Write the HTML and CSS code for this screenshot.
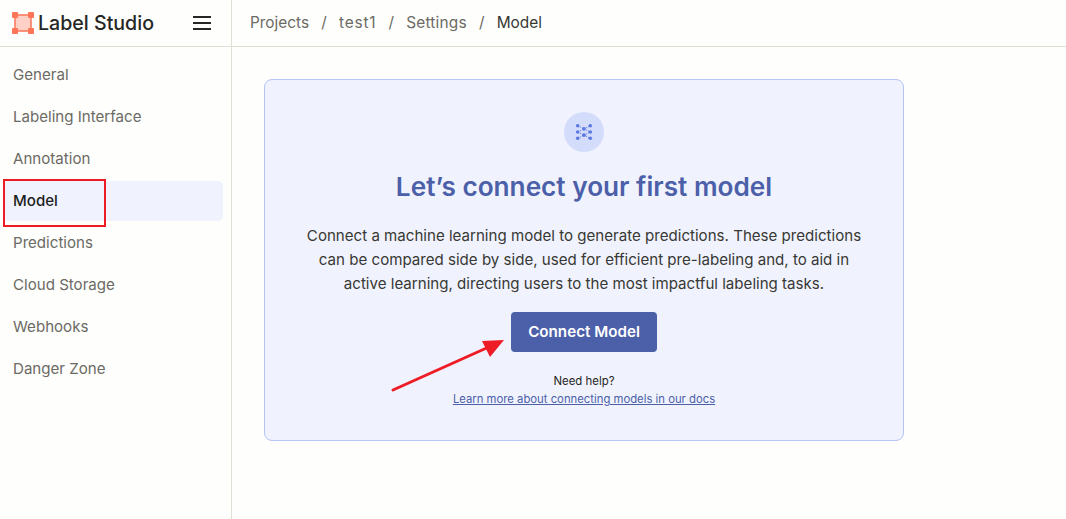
FILE: index.html
```html
<!DOCTYPE html>
<html>
	<head>
		<meta charset="utf-8" />
		<title>Model settings</title>
		<link rel="stylesheet" href="styles.css">
	</head>
	<body>
		<div class="topbar">
			<div class="brand">
				<svg class="logo" width="22" height="22" viewBox="0 0 22 22">
					<rect x="3" y="3" width="16" height="16" rx="2" fill="#ffd0c6" stroke="#ff7557" stroke-width="1.5" />
					<rect x="0" y="0" width="6" height="6" rx="1" fill="#ff7557" />
					<rect x="16" y="0" width="6" height="6" rx="1" fill="#ff7557" />
					<rect x="0" y="16" width="6" height="6" rx="1" fill="#ff7557" />
					<rect x="16" y="16" width="6" height="6" rx="1" fill="#ff7557" />
				</svg>
				<span class="brand-name">Label Studio</span>
				<div class="burger"><i></i><i></i><i></i></div>
			</div>
			<div class="crumbs">
				<a>Projects</a><span>/</span>
				<a class="project">test1</a><span>/</span>
				<a class="settings">Settings</a><span>/</span>
				<a class="current">Model</a>
			</div>
		</div>
		<div class="page">
			<div class="sidebar">
				<a class="item">General</a>
				<a class="item">Labeling Interface</a>
				<a class="item">Annotation</a>
				<a class="item active">Model<b class="highlight"></b></a>
				<a class="item">Predictions</a>
				<a class="item">Cloud Storage</a>
				<a class="item">Webhooks</a>
				<a class="item">Danger Zone</a>
			</div>
			<div class="content">
				<div class="card">
					<div class="badge">
						<svg width="20" height="20" viewBox="0 0 20 20">
							<g stroke="#5b78e0" stroke-width="1" stroke-dasharray="1.4 1.2" fill="none">
								<path d="M3 3L10 6.5L17 3M3 10L10 6.5L17 10M3 10L10 13.5L17 10M3 17L10 13.5L17 17" />
							</g>
							<g fill="#5b78e0">
								<circle cx="3" cy="3" r="2" />
								<circle cx="17" cy="3" r="2" />
								<circle cx="3" cy="10" r="2" />
								<circle cx="17" cy="10" r="2" />
								<circle cx="3" cy="17" r="2" />
								<circle cx="17" cy="17" r="2" />
								<circle cx="10" cy="6.5" r="2" />
								<circle cx="10" cy="13.5" r="2" />
							</g>
						</svg>
					</div>
					<h2 class="title">Let’s connect your first model</h2>
					<p class="text">Connect a machine learning model to generate predictions. These predictions can be compared side by side, used for efficient pre-labeling and, to aid in active learning, directing users to the most impactful labeling tasks.</p>
					<button class="button">Connect Model</button>
					<span class="help">Need help?</span>
					<a class="docs">Learn more about connecting models in our docs</a>
					<svg class="arrow" width="120" height="60" viewBox="0 0 120 60">
						<path d="M2 50L100 6" stroke="#ee1c25" stroke-width="3" stroke-linecap="round" />
						<path d="M113 0L91 1L99 17Z" fill="#ee1c25" />
					</svg>
				</div>
			</div>
		</div>
	</body>
</html>
```

FILE: styles.css
```css
html {
	height: 100%;
}
body {
	margin: 0;
	height: 519px;
	overflow: hidden;
	background-color: rgb(254, 254, 252);
	color: rgb(38, 38, 36);
	font-family: 'Inter', sans-serif;
	display: flex;
	flex-direction: column;
}
.topbar {
	height: 46px;
	flex: none;
	display: flex;
	border-bottom: 1px solid rgb(225, 222, 213);
}
.brand {
	width: 232px;
	flex: none;
	display: flex;
	align-items: center;
	padding: 0 20px 0 12px;
	box-sizing: border-box;
	border-right: 1px solid rgb(225, 222, 213);
}
.logo {
	flex: none;
	margin-right: 4px;
}
.brand-name {
	font-size: 19.6px;
	font-weight: 500;
	flex: 1;
	white-space: nowrap;
}
.burger {
	width: 18px;
	display: flex;
	flex-direction: column;
	gap: 4px;
}
.burger i {
	display: block;
	height: 2px;
	background-color: rgb(38, 38, 36);
}
.crumbs {
	display: flex;
	align-items: center;
	padding: 0 0 2px 18px;
	gap: 12.2px;
	font-size: 15.4px;
	color: rgb(107, 106, 100);
}
.crumbs .project {
	letter-spacing: 0.8px;
}
.crumbs .settings {
	letter-spacing: 0.2px;
}
.crumbs .current {
	color: rgb(56, 56, 52);
}
.page {
	flex: 1;
	display: flex;
}
.sidebar {
	width: 232px;
	flex: none;
	box-sizing: border-box;
	border-right: 1px solid rgb(225, 222, 213);
	padding: 8px 8px 0 3px;
	display: flex;
	flex-direction: column;
	gap: 2px;
}
.item {
	position: relative;
	height: 40px;
	line-height: 40px;
	padding-left: 10px;
	border-radius: 5px;
	font-size: 15.1px;
	color: rgb(107, 106, 100);
}
.item.active {
	background-color: rgb(240, 243, 254);
	color: rgb(30, 30, 28);
	font-weight: 500;
}
.highlight {
	position: absolute;
	left: 0;
	top: -2px;
	width: 103px;
	height: 48px;
	box-sizing: border-box;
	border: 2px solid rgb(237, 28, 36);
}
.content {
	flex: 1;
	padding: 32px;
}
.card {
	position: relative;
	width: 640px;
	height: 362px;
	box-sizing: border-box;
	background-color: rgb(240, 243, 254);
	border: 1px solid rgb(182, 196, 246);
	border-radius: 8px;
	padding-top: 32px;
	display: flex;
	flex-direction: column;
	align-items: center;
}
.badge {
	width: 40px;
	height: 40px;
	border-radius: 50%;
	background-color: rgb(212, 220, 251);
	display: flex;
	align-items: center;
	justify-content: center;
}
.badge svg {
	width: 18px;
	height: 20px;
}
.title {
	margin: 18px 0 0;
	font-size: 26.2px;
	line-height: 34px;
	font-weight: 600;
	color: rgb(76, 95, 169);
}
.text {
	margin: 20px 0 0;
	width: 570px;
	text-align: center;
	font-size: 15.1px;
	line-height: 24px;
	color: rgb(56, 56, 52);
}
.button {
	margin-top: 16px;
	width: 146px;
	height: 40px;
	padding: 0 0 2px;
	border: none;
	border-radius: 4px;
	background-color: rgb(76, 95, 169);
	color: rgb(255, 255, 255);
	font-family: inherit;
	font-size: 15.2px;
	font-weight: 600;
}
.help {
	margin-top: 21px;
	font-size: 11.4px;
	line-height: 16px;
}
.docs {
	margin-top: 2px;
	font-size: 11.3px;
	line-height: 16px;
	color: rgb(76, 95, 169);
	text-decoration: underline;
}
.arrow {
	position: absolute;
	left: 126px;
	top: 260px;
}
```
